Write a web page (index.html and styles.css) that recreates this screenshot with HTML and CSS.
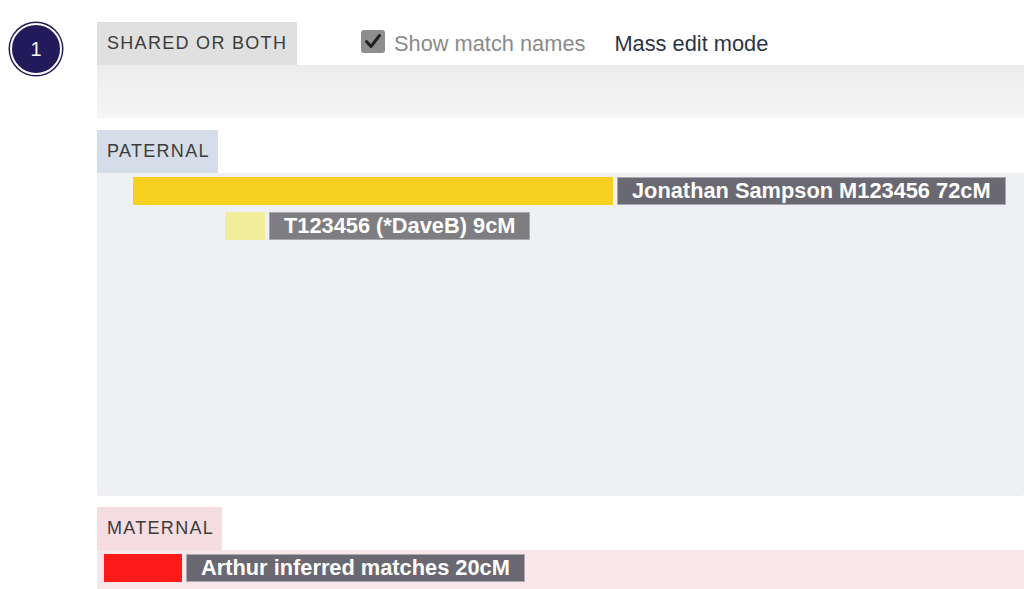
FILE: index.html
```html
<!DOCTYPE html>
<html>
<head>
<meta charset="utf-8">
<link rel="stylesheet" href="styles.css">
</head>
<body>
<div class="page">
  <div class="side">
    <div class="chrom">1</div>
  </div>
  <div class="main">
    <div class="header">
      <div class="tab tab-shared">SHARED OR BOTH</div>
      <label class="check">
        <span class="box"><svg width="24" height="23" viewBox="0 0 24 23"><path d="M5.5 11.5 L10 16.5 L18.5 5.5" fill="none" stroke="#222" stroke-width="3" stroke-linecap="round" stroke-linejoin="round"/></svg></span>
        <span class="check-text">Show match names</span>
      </label>
      <span class="mass">Mass edit mode</span>
    </div>
    <div class="body body-shared"></div>

    <div class="tab tab-pat">PATERNAL</div>
    <div class="body body-pat">
      <div class="row">
        <span class="bar bar-yellow" style="margin-left:36px;width:480px"></span>
        <span class="label">Jonathan Sampson M123456 72cM</span>
      </div>
      <div class="row">
        <span class="bar bar-pale" style="margin-left:128px;width:40px"></span>
        <span class="label label-light">T123456 (*DaveB) 9cM</span>
      </div>
    </div>

    <div class="tab tab-mat">MATERNAL</div>
    <div class="body body-mat">
      <div class="row">
        <span class="bar bar-red" style="margin-left:7px;width:78px"></span>
        <span class="label">Arthur inferred matches 20cM</span>
      </div>
    </div>
  </div>
</div>
</body>
</html>
```

FILE: styles.css
```css
html, body {
  margin: 0;
  padding: 0;
  background: #fff;
  font-family: "Liberation Sans", Arial, Helvetica, sans-serif;
}
.page {
  display: flex;
  padding-top: 22px;
}
.side {
  width: 97px;
  flex: none;
}
.chrom {
  margin-left: 10px;
  width: 48px;
  height: 48px;
  border-radius: 50%;
  background: #231a5c;
  border: 2px solid #fff;
  box-shadow: 0 0 0 1.5px #231a5c;
  color: #fff;
  font-size: 20px;
  display: flex;
  align-items: center;
  justify-content: center;
  margin-top: 1px;
}
.main {
  flex: 1;
  min-width: 0;
}
.header {
  display: flex;
  align-items: center;
  height: 43px;
}
.tab {
  height: 43px;
  box-sizing: border-box;
  display: flex;
  align-items: center;
  padding: 0 0 0 10px;
  font-size: 18px;
  letter-spacing: 1.3px;
  color: #3c3c3c;
  white-space: nowrap;
  flex: none;
}
.tab-shared {
  background: #e0e0e0;
  width: 200px;
}
.tab-pat {
  background: #d5dde8;
  width: 121px;
  margin-top: 12px;
}
.tab-mat {
  background: #f5dde2;
  width: 125px;
  margin-top: 11px;
}
.check {
  display: flex;
  align-items: center;
  margin-left: 64px;
  margin-top: -4px;
}
.box {
  width: 24px;
  height: 23px;
  border-radius: 3px;
  background: #8e8e8e;
  display: block;
}
.box svg { display: block; }
.check-text {
  margin-left: 9px;
  font-size: 21.8px;
  color: #8a8a8a;
  margin-top: 4px;
}
.mass {
  margin-left: 29px;
  font-size: 21.8px;
  color: #2b3545;
}
.body-shared {
  height: 53px;
  background: linear-gradient(#ececec, #f6f6f6);
}
.body-pat {
  height: 323px;
  background: #eff0f4;
  padding-top: 4px;
  box-sizing: border-box;
  border-radius: 0 0 3px 3px;
  display: flex;
  flex-direction: column;
  gap: 7px;
}
.body-mat {
  height: 39px;
  background: #f8e8eb;
  padding-top: 4px;
  box-sizing: border-box;
}
.row {
  display: flex;
  height: 28px;
  align-items: stretch;
}
.bar {
  display: block;
  flex: none;
}
.bar-yellow { background: #f7d020; }
.bar-pale { background: #f0ee9a; }
.bar-red { background: #ff1a1a; }
.label {
  margin-left: 4px;
  background: #6a6870;
  border: 1px solid #a9a8ae;
  box-sizing: border-box;
  color: #fff;
  font-weight: bold;
  font-size: 21.8px;
  padding: 0 14px;
  display: flex;
  align-items: center;
  white-space: nowrap;
}
.label-light {
  background: #7e7d82;
}
```
